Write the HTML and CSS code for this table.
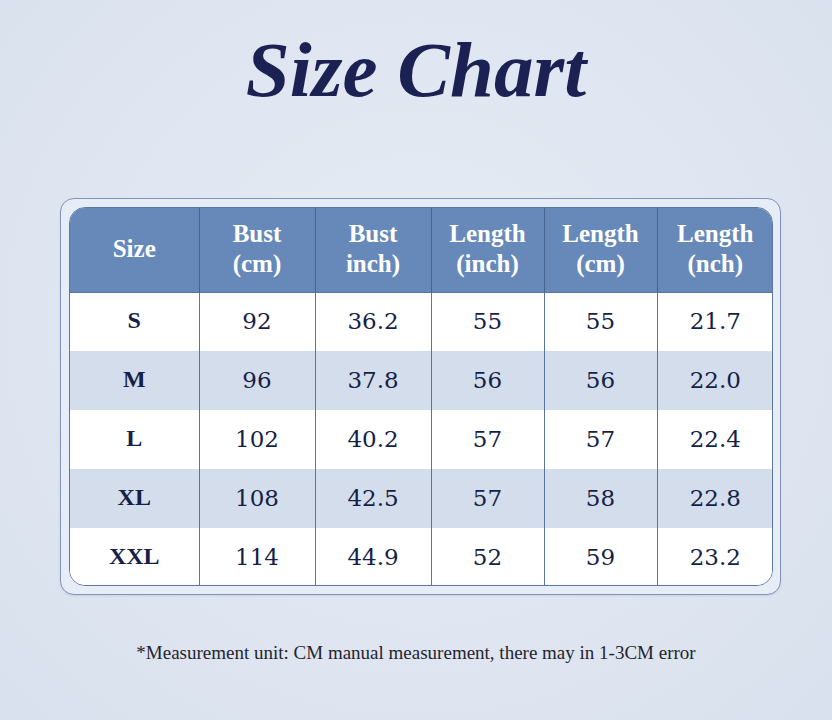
FILE: index.html
```html
<!DOCTYPE html>
<html>
<head>
<meta charset="utf-8">
<link rel="stylesheet" href="styles.css">
</head>
<body>
<div class="page">
  <h1 class="title">Size Chart</h1>
  <div class="frame">
    <div class="table-wrap">
      <table class="chart">
        <colgroup>
          <col class="c1"><col class="c2"><col class="c3"><col class="c4"><col class="c5"><col class="c6">
        </colgroup>
        <thead>
          <tr>
            <th>Size</th>
            <th>Bust<br>(cm)</th>
            <th>Bust<br>inch)</th>
            <th>Length<br>(inch)</th>
            <th>Length<br>(cm)</th>
            <th>Length<br>(nch)</th>
          </tr>
        </thead>
        <tbody>
          <tr class="light"><td class="sz">S</td><td>92</td><td>36.2</td><td>55</td><td>55</td><td>21.7</td></tr>
          <tr class="tint"><td class="sz">M</td><td>96</td><td>37.8</td><td>56</td><td>56</td><td>22.0</td></tr>
          <tr class="light"><td class="sz">L</td><td>102</td><td>40.2</td><td>57</td><td>57</td><td>22.4</td></tr>
          <tr class="tint"><td class="sz">XL</td><td>108</td><td>42.5</td><td>57</td><td>58</td><td>22.8</td></tr>
          <tr class="light"><td class="sz">XXL</td><td>114</td><td>44.9</td><td>52</td><td>59</td><td>23.2</td></tr>
        </tbody>
      </table>
    </div>
  </div>
  <p class="note">*Measurement unit: CM manual measurement, there may in 1-3CM error</p>
</div>
</body>
</html>
```

FILE: styles.css
```css
* { box-sizing: border-box; }
html, body {
  margin: 0;
  padding: 0;
}
body {
  width: 832px;
  height: 720px;
  overflow: hidden;
  background: radial-gradient(ellipse at 50% 45%, #e6ecf5 0%, #dfe6f1 55%, #d9e1ee 100%);
  font-family: "Liberation Serif", "Times New Roman", serif;
}
.page {
  display: flex;
  flex-direction: column;
  align-items: center;
}
.title {
  margin: 20px 0 0 0;
  height: 100px;
  line-height: 100px;
  font-size: 79px;
  font-weight: bold;
  font-style: italic;
  color: #1b2152;
  text-align: center;
}
.frame {
  margin-top: 78px;
  margin-left: 9px;
  width: 721px;
  height: 397px;
  padding: 8px 7px 8px 8px;
  border: 1.5px solid #8094bc;
  border-radius: 14px;
  background: #e7edf6;
  box-shadow: 0 1px 2px rgba(80, 100, 140, 0.15);
}
.table-wrap {
  width: 704px;
  height: 379px;
  border: 1px solid #5d77a4;
  border-radius: 16px;
  overflow: hidden;
  background: #fff;
}
.chart {
  width: 100%;
  height: 100%;
  border-collapse: collapse;
  table-layout: fixed;
}
.c1 { width: 129px; }
.c2 { width: 116px; }
.c3 { width: 116px; }
.c4 { width: 113px; }
.c5 { width: 113px; }
.c6 { width: 116px; }
.chart th {
  height: 84px;
  background: #6789ba;
  color: #ffffff;
  font-family: "Liberation Serif", serif;
  font-weight: bold;
  font-size: 25px;
  line-height: 30px;
  text-align: center;
  vertical-align: middle;
  border-left: 1px solid #48638f;
  border-bottom: 1px solid #5a74a0;
  padding: 0 0 2px 0;
}
.chart th:first-child,
.chart td:first-child { border-left: none; }
.chart td {
  height: 59px;
  text-align: center;
  vertical-align: middle;
  border-left: 1px solid #5a74a0;
  font-family: "DejaVu Serif", serif;
  font-size: 23px;
  color: #161f48;
  padding: 0 0 2px 0;
}
.chart td.sz {
  font-family: "Liberation Serif", serif;
  font-weight: bold;
  font-size: 24px;
}
.light td { background: #ffffff; }
.tint td { background: #d3ddec; }
.note {
  margin: 46px 0 0 0;
  font-size: 19px;
  line-height: 24px;
  color: #24242e;
  text-align: center;
}
```
